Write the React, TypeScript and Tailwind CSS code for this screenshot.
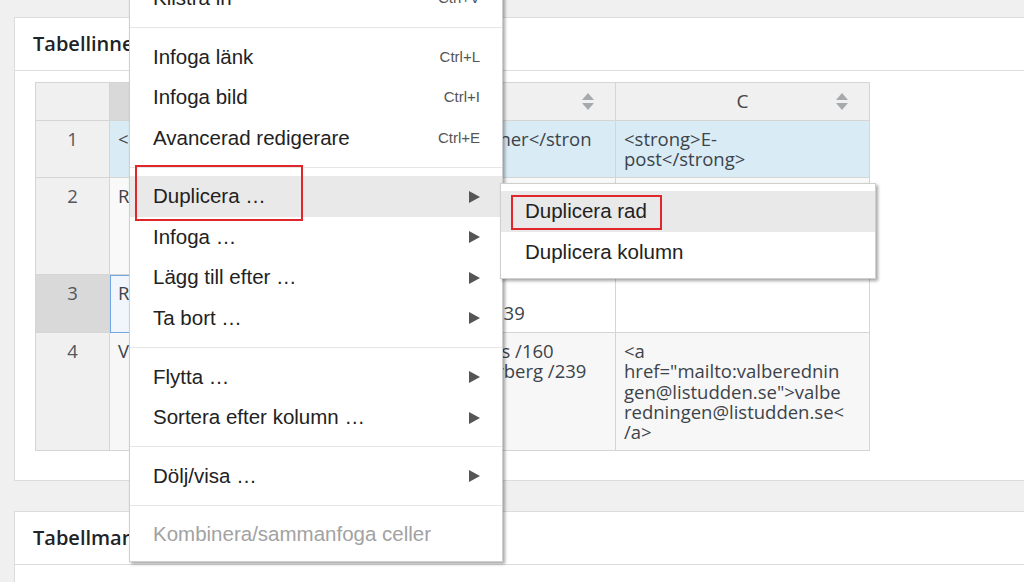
import React from "react";

const MENU_FONT = { fontFamily: '"Liberation Sans", Arial, sans-serif' };

function Arrow() {
  return (
    <svg width="11" height="12" viewBox="0 0 11 12" className="block">
      <polygon points="0,0 11,6 0,12" fill="#555" />
    </svg>
  );
}

function SortIcon() {
  return (
    <svg width="12" height="17" viewBox="0 0 12 17" className="block">
      <polygon points="6,0 12,7 0,7" fill="#a7aaad" />
      <polygon points="0,10 12,10 6,17" fill="#a7aaad" />
    </svg>
  );
}

type MenuEntry =
  | { kind: "sep" }
  | { kind: "item"; label: string; shortcut?: string; sub?: boolean; active?: boolean; disabled?: boolean };

const menu: MenuEntry[] = [
  { kind: "item", label: "Klistra in", shortcut: "Ctrl+V" },
  { kind: "sep" },
  { kind: "item", label: "Infoga länk", shortcut: "Ctrl+L" },
  { kind: "item", label: "Infoga bild", shortcut: "Ctrl+I" },
  { kind: "item", label: "Avancerad redigerare", shortcut: "Ctrl+E" },
  { kind: "sep" },
  { kind: "item", label: "Duplicera …", sub: true, active: true },
  { kind: "item", label: "Infoga …", sub: true },
  { kind: "item", label: "Lägg till efter …", sub: true },
  { kind: "item", label: "Ta bort …", sub: true },
  { kind: "sep" },
  { kind: "item", label: "Flytta …", sub: true },
  { kind: "item", label: "Sortera efter kolumn …", sub: true },
  { kind: "sep" },
  { kind: "item", label: "Dölj/visa …", sub: true },
  { kind: "sep" },
  { kind: "item", label: "Kombinera/sammanfoga celler", disabled: true },
];

function ContextMenu() {
  return (
    <div
      className="absolute left-[129px] top-[-29px] w-[374px] bg-white border border-[#cfcfcf] py-[6px] shadow-[2px_2px_3px_rgba(0,0,0,0.35)]"
      style={MENU_FONT}
    >
      {menu.map((m, i) =>
        m.kind === "sep" ? (
          <div key={i} className="h-[18px] flex items-center">
            <div className="h-px w-full bg-[#e6e6e6]" />
          </div>
        ) : (
          <div
            key={i}
            className={`h-[40.6px] flex items-center justify-between pl-[23px] pr-[22px] text-[20.5px] ${
              m.active ? "bg-[#e9e9e9]" : ""
            } ${m.disabled ? "text-[#a2a2a2]" : "text-[#222]"}`}
          >
            <span>{m.label}</span>
            {m.shortcut && <span className="text-[15px] text-[#555]">{m.shortcut}</span>}
            {m.sub && <Arrow />}
          </div>
        )
      )}
    </div>
  );
}

function SubMenu() {
  return (
    <div
      className="absolute left-[500px] top-[183px] w-[376px] h-[96px] bg-white border border-[#cfcfcf] pt-[7px] shadow-[2px_2px_3px_rgba(0,0,0,0.35)]"
      style={MENU_FONT}
    >
      <div className="h-[40.6px] flex items-center pl-[24px] text-[20.5px] text-[#222] bg-[#e9e9e9]">Duplicera rad</div>
      <div className="h-[40.6px] flex items-center pl-[24px] text-[20.5px] text-[#222]">Duplicera kolumn</div>
    </div>
  );
}

function Lines({ lines }: { lines: string[] }) {
  return (
    <>
      {lines.map((l, i) => (
        <div key={i} className="whitespace-nowrap">
          {l}
        </div>
      ))}
    </>
  );
}

const rows: { h: string; num: string; a: string[]; b: string[]; c: string[]; bg: string; sel?: boolean }[] = [
  {
    h: "h-[57px]",
    num: "1",
    a: ["<strong>Uppdrag</strong>"],
    b: ["<strong>Två personer</stron", "g>"],
    c: ["<strong>E-", "post</strong>"],
    bg: "bg-[#d9ebf5]",
  },
  {
    h: "h-[97px]",
    num: "2",
    a: ["Revisorer"],
    b: ["Anna Svensson /112", "Per Nilsson /145", "Lars Holm /201", "Eva Berg /87"],
    c: ["<a", "href=\"mailto:revisorer@lis", "tudden.se\">revisorer@list", "udden.se</a>"],
    bg: "bg-[#f9f9f9]",
  },
  {
    h: "h-[58px]",
    num: "3",
    a: ["Revisorssuppleant"],
    b: ["Ulf Ek /12", "Karin Andersson /239"],
    c: [],
    bg: "bg-white",
    sel: true,
  },
  {
    h: "h-[118px]",
    num: "4",
    a: ["Valberedning"],
    b: ["Kristina Anderssons /160", "Ann-Margret Söderberg /239"],
    c: ["<a", "href=\"mailto:valberednin", "gen@listudden.se\">valbe", "redningen@listudden.se<", "/a>"],
    bg: "bg-[#f7f7f7]",
  },
];

function DataTable() {
  const cell = "border border-[#d5d5d5] align-top pt-[8px] px-[8px] text-[18.5px] leading-[20.3px] text-[#3c434a]";
  return (
    <table className="table-fixed border-collapse w-[834px]" style={{ fontFamily: '"Open Sans", "Noto Sans", sans-serif' }}>
      <colgroup>
        <col className="w-[74px]" />
        <col className="w-[221px]" />
        <col className="w-[285px]" />
        <col className="w-[254px]" />
      </colgroup>
      <thead>
        <tr className="h-[38px]">
          <th className="border border-[#d5d5d5] bg-[#f0f0f0]" />
          <th className="relative border border-[#d5d5d5] bg-[#d9d9d9] font-normal text-[19px] text-[#444]">
            A
            <span className="absolute right-[20px] top-[10px]">
              <SortIcon />
            </span>
          </th>
          <th className="relative border border-[#d5d5d5] bg-[#f0f0f0] font-normal text-[19px] text-[#444]">
            B
            <span className="absolute right-[21px] top-[10px]">
              <SortIcon />
            </span>
          </th>
          <th className="relative border border-[#d5d5d5] bg-[#f0f0f0] font-normal text-[19px] text-[#444]">
            C
            <span className="absolute right-[21px] top-[10px]">
              <SortIcon />
            </span>
          </th>
        </tr>
      </thead>
      <tbody>
        {rows.map((r) => (
          <tr key={r.num} className={r.h}>
            <td className={`${cell} text-center text-[#50575e] ${r.sel ? "bg-[#d9d9d9]" : "bg-[#f0f0f0]"}`}>{r.num}</td>
            <td className={`${cell} overflow-hidden ${r.sel ? "bg-[#f0f6fc] outline outline-1 outline-[#72a7e6] -outline-offset-1" : r.bg}`}>
              <Lines lines={r.a} />
            </td>
            <td className={`${cell} overflow-hidden ${r.bg}`}>
              <Lines lines={r.b} />
            </td>
            <td className={`${cell} overflow-hidden ${r.bg}`}>
              <Lines lines={r.c} />
            </td>
          </tr>
        ))}
      </tbody>
    </table>
  );
}

function Card({ title, children }: { title: string; children?: React.ReactNode }) {
  return (
    <div className="w-[1040px] bg-white border border-[#dcdcde]">
      <div className="h-[53px] border-b border-[#dcdcde] flex items-center pl-[18px]">
        <h2
          className="text-[20px] font-semibold text-[#1d2327]"
          style={{ fontFamily: '"Open Sans", "Noto Sans", sans-serif' }}
        >
          {title}
        </h2>
      </div>
      {children}
    </div>
  );
}

export default function App() {
  return (
    <div className="relative w-[1024px] h-[582px] overflow-hidden bg-[#f0f0f1]">
      <div className="pt-[17px] pl-[14px] flex flex-col gap-[30px]">
        <Card title="Tabellinnehåll">
          <div className="pt-[11px] pl-[20px] pb-[29px]">
            <DataTable />
          </div>
        </Card>
        <Card title="Tabellmanipulation">
          <div className="h-[60px]" />
        </Card>
      </div>

      <ContextMenu />
      <SubMenu />

      <div className="absolute left-[135px] top-[165px] w-[168px] h-[56px] border-[2.5px] border-[#e0262b]" />
      <div className="absolute left-[511px] top-[195px] w-[151px] h-[35px] border-[2.5px] border-[#e0262b]" />
    </div>
  );
}
